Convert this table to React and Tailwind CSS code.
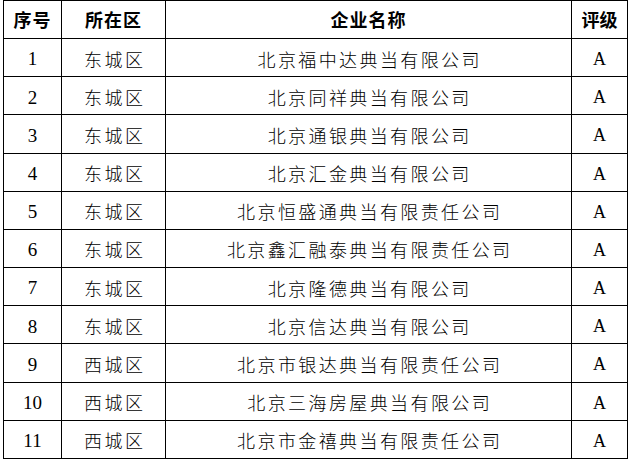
import React from 'react'

const rows = [
  ['1', '东城区', '北京福中达典当有限公司', 'A'],
  ['2', '东城区', '北京同祥典当有限公司', 'A'],
  ['3', '东城区', '北京通银典当有限公司', 'A'],
  ['4', '东城区', '北京汇金典当有限公司', 'A'],
  ['5', '东城区', '北京恒盛通典当有限责任公司', 'A'],
  ['6', '东城区', '北京鑫汇融泰典当有限责任公司', 'A'],
  ['7', '东城区', '北京隆德典当有限公司', 'A'],
  ['8', '东城区', '北京信达典当有限公司', 'A'],
  ['9', '西城区', '北京市银达典当有限责任公司', 'A'],
  ['10', '西城区', '北京三海房屋典当有限公司', 'A'],
  ['11', '西城区', '北京市金禧典当有限责任公司', 'A'],
]

const cell = 'flex items-center justify-center border-r border-b border-black'
const cjk = "font-['Noto_Sans_CJK_SC',sans-serif]"
const latin = "font-['Liberation_Serif','Noto_Sans_CJK_SC',serif]"

export default function App() {
  return (
    <div className="w-[631px] h-[460px] bg-white overflow-hidden">
      <div className="ml-[3px] w-[625px] border-l border-t border-black grid grid-cols-[58px_104px_406px_56px] text-black">
        <div className={`${cell} ${cjk} h-[38px] text-[18px] font-bold tracking-[1px]`}>序号</div>
        <div className={`${cell} ${cjk} h-[38px] text-[18px] font-bold tracking-[1px]`}>所在区</div>
        <div className={`${cell} ${cjk} h-[38px] text-[18px] font-bold tracking-[1px]`}>企业名称</div>
        <div className={`${cell} ${cjk} h-[38px] text-[18px] font-bold`}>评级</div>
        {rows.map(r => (
          <React.Fragment key={r[0]}>
            <div className={`${cell} ${latin} h-[38.18px] pt-[4px] text-[19px]`}>{r[0]}</div>
            <div className={`${cell} ${cjk} h-[38.18px] pt-[3px] text-[18px] font-light tracking-[2.4px] pl-[2.4px]`}>{r[1]}</div>
            <div className={`${cell} ${cjk} h-[38.18px] pt-[3px] text-[18px] font-light tracking-[2.4px] pl-[2.4px]`}>{r[2]}</div>
            <div className={`${cell} ${latin} h-[38.18px] pt-[4px] text-[18px] font-light`}>{r[3]}</div>
          </React.Fragment>
        ))}
      </div>
    </div>
  )
}
